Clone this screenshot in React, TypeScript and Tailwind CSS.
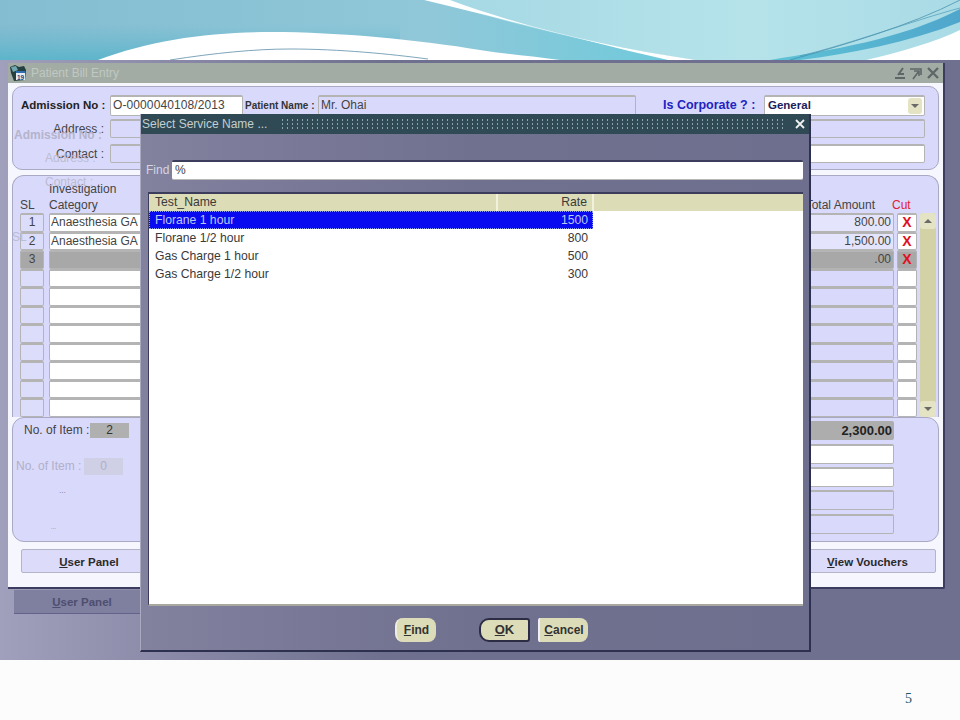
const font = "font-['Liberation_Sans',Arial,sans-serif]"

const services = [
  { name: 'Florane 1 hour', rate: '1500' },
  { name: 'Florane 1/2 hour', rate: '800' },
  { name: 'Gas Charge 1 hour', rate: '500' },
  { name: 'Gas Charge 1/2 hour', rate: '300' },
]

const lines = [
  { sl: '1', category: 'Anaesthesia GA', amount: '800.00', cut: true },
  { sl: '2', category: 'Anaesthesia GA', amount: '1,500.00', cut: true },
  { sl: '3', category: '', amount: '.00', cut: true, current: true },
  ...Array.from({ length: 8 }, () => ({ sl: '', category: '', amount: '', cut: false })),
]

const field = 'border border-[#b4b4b4] border-t-2 rounded-[2px]'

const Banner = () => (
  <svg viewBox="0 0 960 60" className="block w-[960px] h-[60px]">
    <defs>
      <linearGradient id="sky" x1="0" x2="1" y1="0" y2="0">
        <stop offset="0" stopColor="#84bcd1" />
        <stop offset="0.45" stopColor="#90c8d9" />
        <stop offset="0.7" stopColor="#6fcadb" />
        <stop offset="1" stopColor="#6fcadb" />
      </linearGradient>
      <linearGradient id="deep" x1="0" x2="0" y1="0" y2="1">
        <stop offset="0.4" stopColor="#5fb6cc" stopOpacity="0" />
        <stop offset="1" stopColor="#4fb2c8" stopOpacity="0.75" />
      </linearGradient>
      <linearGradient id="light" x1="0" x2="1" y1="0" y2="0">
        <stop offset="0" stopColor="#a4d8e4" />
        <stop offset="0.6" stopColor="#b6e3ea" />
        <stop offset="1" stopColor="#a9dbe6" />
      </linearGradient>
      <linearGradient id="edge" x1="0" x2="1" y1="0" y2="0">
        <stop offset="0" stopColor="#5fc3d6" />
        <stop offset="1" stopColor="#4fa6cc" />
      </linearGradient>
    </defs>
    <rect width="960" height="60" fill="url(#sky)" />
    <rect width="400" height="60" fill="url(#deep)" />
    <path d="M430 0 C520 26 610 48 696 60 L960 60 L960 0 Z" fill="url(#light)" />
    <path d="M98 60 C150 40 210 32 270 32 C340 32 420 40 480 50 C505 54 530 56 560 60 Z" fill="#ffffff" />
    <path d="M424 0 L450 0 C520 26 610 48 696 60 L668 60 C590 42 500 18 424 0 Z" fill="#ffffff" />
    <path d="M170 60 C215 53 255 49 290 49 C340 49 390 54 428 59" fill="none" stroke="#5d8ea8" strokeWidth="0.8" />
    <path d="M770 60 C830 50 900 40 960 9 L960 22 C910 42 850 54 800 60 Z" fill="url(#edge)" />
    <path d="M866 60 C900 52 935 42 960 30 L960 60 Z" fill="#ffffff" />
    <path d="M790 60 C840 46 910 26 960 0" fill="none" stroke="#3f8aa8" strokeWidth="0.7" />
    <path d="M800 56 C850 44 915 20 960 8" fill="none" stroke="#4d99b5" strokeWidth="0.7" />
  </svg>
)

const BillIcon = () => (
  <svg viewBox="0 0 18 18" className="w-[18px] h-[18px] shrink-0">
    <path d="M1 3 L6 1 L10 3 L15 2 L17 6 L16 16 L5 17 L2 9 Z" fill="#24403f" />
    <path d="M2 3 L7 2 L9 6 L4 8 Z" fill="#6fa8b0" />
    <rect x="7" y="7" width="9" height="9" fill="#e6edf2" />
    <rect x="7" y="7" width="9" height="2" fill="#2f6fb0" />
    <text x="8" y="15.5" fontSize="6.5" fontWeight="700" fill="#1d3f7a" fontFamily="Liberation Sans">19</text>
  </svg>
)

const WindowControls = () => (
  <svg viewBox="0 0 46 14" className="w-[46px] h-[14px]" fill="none" stroke="#5f6668" strokeWidth="2">
    <path d="M1 12 H11 M4 9 L9 2 M5 8 H10" />
    <path d="M16 3 H27 V9 M19 13 L25 5 M20 5 H25 V10" strokeWidth="1.6" />
    <path d="M34 2 L44 12 M44 2 L34 12" strokeWidth="2.4" />
  </svg>
)

const ArrowButton = ({ down }: { down?: boolean }) => (
  <div className="h-[16px] shrink-0 rounded-[3px] bg-[#e4e4c4] flex items-center justify-center">
    <div
      className={
        down
          ? 'w-0 h-0 border-x-[4px] border-x-transparent border-t-[4px] border-t-[#6a6a6a]'
          : 'w-0 h-0 border-x-[4px] border-x-transparent border-b-[4px] border-b-[#6a6a6a]'
      }
    />
  </div>
)

const HeaderPanel = () => (
  <div className="h-[84px] shrink-0 rounded-[10px] border border-[#a9a9c4] bg-[#d9d9fb] pt-[8px] pl-[8px] pr-[13px] flex flex-col text-[12px] text-[#444]">
    <div className="flex items-center h-[21px]">
      <span className="w-[89px] text-[11.5px] font-bold text-[#222] whitespace-nowrap">Admission No :</span>
      <div className={`${field} w-[133px] h-full bg-white px-[2px] leading-[17px] tracking-[0.1px] text-[#444]`}>O-0000040108/2013</div>
      <span className="w-[75px] pl-[2px] text-[10px] font-semibold text-[#333] whitespace-nowrap">Patient Name :</span>
      <div className={`${field} w-[318px] h-full bg-[#d9d9fb] px-[2px] leading-[17px]`}>Mr. Ohai</div>
      <span className="ml-[27px] w-[101px] text-[12.5px] font-bold text-[#2323c0] whitespace-nowrap">Is Corporate ? :</span>
      <div className={`${field} flex-1 h-full bg-white pl-[3px] pr-[2px] flex items-center justify-between font-semibold text-[11.5px] text-[#20205a]`}>
        General
        <div className="w-[14px]"><ArrowButton down /></div>
      </div>
    </div>
    <div className="mt-[3px] flex items-center h-[19px]">
      <span className="w-[83px] text-right whitespace-nowrap">Address :</span>
      <div className={`${field} ml-[6px] w-[300px] h-full`} />
      <div className={`${field} ml-auto w-[160px] h-full bg-[#d9d9fb]`} />
    </div>
    <div className="mt-[6px] flex items-center h-[19px]">
      <span className="w-[83px] text-right whitespace-nowrap">Contact :</span>
      <div className={`${field} ml-[6px] w-[300px] h-full`} />
      <div className={`${field} ml-auto w-[160px] h-full bg-white`} />
    </div>
  </div>
)

const LinesPanel = () => (
  <div className="h-[242px] shrink-0 mt-[5px] rounded-t-[12px] border border-b-0 border-[#a9a9c4] bg-[#d9d9fb] pl-[7px] pr-[2px] flex flex-col text-[12px] text-[#444]">
    <div className="h-[37px] shrink-0 flex items-end leading-[16px]">
      <span className="w-[29px]">SL</span>
      <span>
        Investigation
        <br />
        Category
      </span>
      <span className="ml-auto w-[80px] text-right">Total Amount</span>
      <span className="ml-[17px] w-[44px] text-[#e02030]">Cut</span>
    </div>
    <div className="h-[204px] flex gap-[3px]">
      <div className="flex-1 flex flex-col">
        {lines.map((line, i) => (
          <div key={i} className="flex-1 min-h-0 flex gap-[5px]">
            <div className={`${field} w-[24px] text-center leading-[15px] ${line.current ? 'bg-[#a8a8a8]' : 'bg-[#dcdcfb]'}`}>{line.sl}</div>
            <div className={`${field} w-[400px] px-[1px] leading-[15px] whitespace-nowrap ${line.current ? 'bg-[#a8a8a8]' : 'bg-white'}`}>{line.category}</div>
            <div className={`${field} ml-auto w-[300px] pr-[2px] text-right leading-[15px] ${line.current ? 'bg-[#a8a8a8]' : i < 2 ? 'bg-[#e4e4fd]' : 'bg-[#d9d9fb]'}`}>{line.amount}</div>
            <div className={`${field} -ml-[2px] w-[20px] text-center font-bold text-[14px] leading-[15px] text-[#e01020] ${line.current ? 'bg-[#a8a8a8]' : 'bg-white'}`}>{line.cut ? 'X' : ''}</div>
          </div>
        ))}
      </div>
      <div className="w-[16px] flex flex-col justify-between rounded-[3px] bg-[#d2d2a6]">
        <ArrowButton />
        <ArrowButton down />
      </div>
    </div>
  </div>
)

const TotalsPanel = () => (
  <div className="h-[125px] shrink-0 rounded-[12px] border border-[#a9a9c4] bg-[#d9d9fb] pl-[11px] pr-[44px] pt-[3px] flex justify-between text-[12px] text-[#444]">
    <div className="flex flex-col">
      <div className="flex items-center h-[18px]">
        <span className="w-[66px] whitespace-nowrap">No. of Item :</span>
        <div className="w-[39px] h-[15px] bg-[#b0b0b0] text-center leading-[15px] text-[#333]">2</div>
      </div>
      <span className="mt-[46px] ml-[35px] leading-[12px] text-[8px] text-[#777]">...</span>
      <span className="mt-[24px] ml-[27px] leading-[12px] text-[6px] text-[#777]">...</span>
    </div>
    <div className="w-[300px] flex flex-col gap-[3px]">
      <div className="h-[19px] mb-[1px] bg-[#adadad] rounded-[2px] pr-[2px] text-right text-[13px] font-bold text-[#222] leading-[19px]">2,300.00</div>
      <div className={`${field} h-[20px] bg-white`} />
      <div className={`${field} h-[20px] bg-white`} />
      <div className={`${field} h-[20px]`} />
      <div className={`${field} h-[20px] mt-[1px]`} />
    </div>
  </div>
)

const MainWindow = () => (
  <div className="absolute left-[8px] top-[3px] w-[937px] h-[526px] bg-[#f6f6ff] border-r-2 border-b-2 border-[#3c3c60] rounded-br-[2px] flex flex-col">
    <div className="h-[20px] shrink-0 bg-[#a3aca4] flex items-center justify-between pl-[1px] pr-[3px]">
      <div className="flex items-center gap-[4px]">
        <BillIcon />
        <span className="text-[12px] text-[#bfc8c2]">Patient Bill Entry</span>
      </div>
      <WindowControls />
    </div>
    <div className="flex-1 pl-[4px] pr-[4px] pt-[3px] flex flex-col">
      <HeaderPanel />
      <LinesPanel />
      <TotalsPanel />
      <div className="mt-[7px] flex justify-between pl-[9px] pr-[3px] text-[11.5px] font-bold text-[#2a2a2a]">
        <div className="w-[300px] h-[24px] rounded-[2px] border border-[#b4b4c8] bg-[#dcdcfa]">
          <span className="block w-[134px] text-center leading-[24px]"><u>U</u>ser Panel</span>
        </div>
        <div className="w-[300px] h-[24px] rounded-[2px] border border-[#b4b4c8] bg-[#dcdcfa] flex justify-end pr-[9px]">
          <span className="block w-[117px] text-center leading-[24px]"><u>V</u>iew Vouchers</span>
        </div>
      </div>
    </div>
  </div>
)

const DialogButton = ({ className, hot, rest }: { className: string; hot: string; rest: string }) => (
  <button className={`h-[24px] bg-[#dcdcb8] text-[12px] font-semibold text-[#333] ${className}`}>
    <u>{hot}</u>
    {rest}
  </button>
)

const ServiceDialog = () => (
  <div className="absolute left-[140px] top-[54px] w-[671px] h-[538px] bg-gradient-to-r from-[#82829f] via-[#70708f] to-[#6e6e8e] border-r-2 border-b-2 border-[#2e3050] border-l border-l-[#a9a9c0] flex flex-col text-[12px]">
    <div className="h-[20px] shrink-0 bg-[#2f4a55] flex items-center pl-[1px] pr-[3px] text-[#c4ced0]">
      <span className="w-[138px] whitespace-nowrap">Select Service Name ...</span>
      <div className="w-[506px] h-[12px] bg-[radial-gradient(#8ea4aa_0.7px,transparent_1px)] bg-[length:5px_4px]" />
      <svg viewBox="0 0 10 10" className="ml-[9px] w-[10px] h-[10px]" stroke="#eef2f2" strokeWidth="1.8">
        <path d="M1 1 L9 9 M9 1 L1 9" />
      </svg>
    </div>
    <div className="mt-[26px] h-[20px] flex items-stretch pl-[5px] pr-[6px]">
      <span className="w-[26px] leading-[20px] text-[#d5d5e0]">Find</span>
      <div className="flex-1 bg-white border-t-2 border-[#3c3c5c] border-b border-b-[#b8b8b8] rounded-[2px] pl-[3px] leading-[17px] text-[#444]">%</div>
    </div>
    <div className="mt-[12px] ml-[7px] mr-[6px] h-[414px] bg-white border-t-2 border-l border-[#3c3c5c] border-b-2 border-b-[#a8a8a0] flex flex-col text-[12.2px] text-[#3a3a3a]">
      <div className="h-[17px] shrink-0 flex bg-[#dcdcb6] leading-[17px]">
        <div className="w-[349px] pl-[6px] border-r-2 border-[#f2f2dc]">Test_Name</div>
        <div className="w-[96px] pr-[5px] text-right border-r-2 border-[#f2f2dc]">Rate</div>
      </div>
      {services.map((service, i) => (
        <div
          key={service.name}
          className={`w-[444px] h-[18px] shrink-0 flex justify-between pl-[6px] pr-[5px] leading-[18px] ${i === 0 ? 'bg-[#0a0af0] text-[#bcc8f4] outline-1 -outline-offset-1 outline-dotted outline-[#8c9cf0]' : ''}`}
        >
          <span>{service.name}</span>
          <span>{service.rate}</span>
        </div>
      ))}
    </div>
    <div className="mt-[12px] flex items-start">
      <DialogButton className="ml-[254px] w-[41px] rounded-[8px] border-l-2 border-[#eeeedd]" hot="F" rest="ind" />
      <DialogButton className="ml-[43px] w-[51px] rounded-l-[10px] rounded-r-[3px] border-2 border-[#2c2c44] text-[13px]" hot="O" rest="K" />
      <DialogButton className="ml-[8px] w-[50px] rounded-r-[8px] rounded-l-[2px] border-l-2 border-[#eeeeff]" hot="C" rest="ancel" />
    </div>
  </div>
)

export default function App() {
  return (
    <div className={`w-[960px] h-[720px] overflow-hidden bg-white flex flex-col ${font}`}>
      <Banner />
      <div className="relative h-[600px] bg-gradient-to-r from-[#a0a0bc] to-[#6f6f8f] to-40%">
        <MainWindow />
        {/* faded copy of the window behind, left over from the slide transition */}
        <div className="absolute left-[14px] top-[66px] text-[12px] font-bold text-[#b4b4cc] whitespace-nowrap">Admission No :</div>
        <div className="absolute left-[45px] top-[89px] text-[12px] text-[#bcbcd2] whitespace-nowrap">Address :</div>
        <div className="absolute left-[45px] top-[113px] text-[12px] text-[#bcbcd2] whitespace-nowrap">Contact :</div>
        <div className="absolute left-[12px] top-[168px] text-[12px] text-[#bcbcd2]">SL</div>
        <div className="absolute left-[16px] top-[397px] text-[12px] text-[#b0b0c8] whitespace-nowrap">No. of Item :</div>
        <div className="absolute left-[84px] top-[398px] w-[39px] h-[17px] bg-[#cfcfe6] text-center text-[12px] leading-[17px] text-[#b0b0c8]">0</div>
        <div className="absolute left-[14px] top-[530px] w-[136px] h-[24px] border-b border-[#62628a] bg-[#7f7f9f] text-center text-[11.5px] font-bold leading-[24px] text-[#4e4e70]">
          <u>U</u>ser Panel
        </div>
        <ServiceDialog />
      </div>
      <div className="h-[60px] bg-[#fcfcfc] flex justify-end pt-[31px] pr-[48px] font-['Liberation_Serif',serif] text-[14px] leading-[16px] text-[#1d5566]">
        5
      </div>
    </div>
  )
}
